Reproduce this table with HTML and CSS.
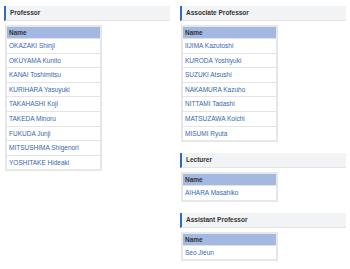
FILE: index.html
```html
<!DOCTYPE html>
<html>
<head>
<meta charset="utf-8">
<link rel="stylesheet" href="styles.css">
</head>
<body>
<div class="page">
  <div class="col">
    <section class="group">
      <h2 class="heading">Professor</h2>
      <table class="staff">
        <thead><tr><th>Name</th></tr></thead>
        <tbody>
          <tr><td>OKAZAKI Shinji</td></tr>
          <tr><td>OKUYAMA Kunito</td></tr>
          <tr><td>KANAI Toshimitsu</td></tr>
          <tr><td>KURIHARA Yasuyuki</td></tr>
          <tr><td>TAKAHASHI Koji</td></tr>
          <tr><td>TAKEDA Minoru</td></tr>
          <tr><td>FUKUDA Junji</td></tr>
          <tr><td>MITSUSHIMA Shigenori</td></tr>
          <tr><td>YOSHITAKE Hideaki</td></tr>
        </tbody>
      </table>
    </section>
  </div>
  <div class="col">
    <section class="group">
      <h2 class="heading">Associate Professor</h2>
      <table class="staff">
        <thead><tr><th>Name</th></tr></thead>
        <tbody>
          <tr><td>IIJIMA Kazutoshi</td></tr>
          <tr><td>KURODA Yoshiyuki</td></tr>
          <tr><td>SUZUKI Atsushi</td></tr>
          <tr><td>NAKAMURA Kazuho</td></tr>
          <tr><td>NITTAMI Tadashi</td></tr>
          <tr><td>MATSUZAWA Koichi</td></tr>
          <tr><td>MISUMI Ryuta</td></tr>
        </tbody>
      </table>
    </section>
    <section class="group">
      <h2 class="heading">Lecturer</h2>
      <table class="staff">
        <thead><tr><th>Name</th></tr></thead>
        <tbody>
          <tr><td>AIHARA Masahiko</td></tr>
        </tbody>
      </table>
    </section>
    <section class="group">
      <h2 class="heading">Assistant Professor</h2>
      <table class="staff">
        <thead><tr><th>Name</th></tr></thead>
        <tbody>
          <tr><td>Seo Jieun</td></tr>
        </tbody>
      </table>
    </section>
  </div>
</div>
</body>
</html>
```
FILE: styles.css
```css
html, body {
  margin: 0;
  padding: 0;
  background: #ffffff;
}
body {
  font-family: "Liberation Sans", Arial, sans-serif;
}
.page {
  display: grid;
  grid-template-columns: 166px 166px;
  column-gap: 10px;
  padding: 6px 4px 0 4px;
}
.col {
  display: flex;
  flex-direction: column;
  gap: 11px;
}
.heading {
  margin: 0;
  height: 14px;
  line-height: 14px;
  background: #f2f3f5;
  border-left: 2px solid #2f6db3;
  border-bottom: 1px solid #e2e4e8;
  padding-left: 4px;
  font-size: 6.5px;
  font-weight: bold;
  color: #333333;
}
.staff {
  margin: 4px 0 0 1px;
  width: 97px;
  border-collapse: collapse;
  border: 2px solid #e6e7e9;
  font-size: 6.5px;
}
.staff th {
  background: #a3b9e2;
  color: #333333;
  font-weight: bold;
  text-align: left;
  height: 11px;
  padding: 0 2px;
  line-height: 11px;
  border-bottom: 1px solid #e0e2e6;
}
.staff td {
  background: #ffffff;
  color: #3667ad;
  height: 13.6px;
  padding: 0 2px;
  line-height: 13.6px;
  border-bottom: 1px solid #e3e4e7;
}
.staff tr:last-child td {
  border-bottom: none;
}
```
